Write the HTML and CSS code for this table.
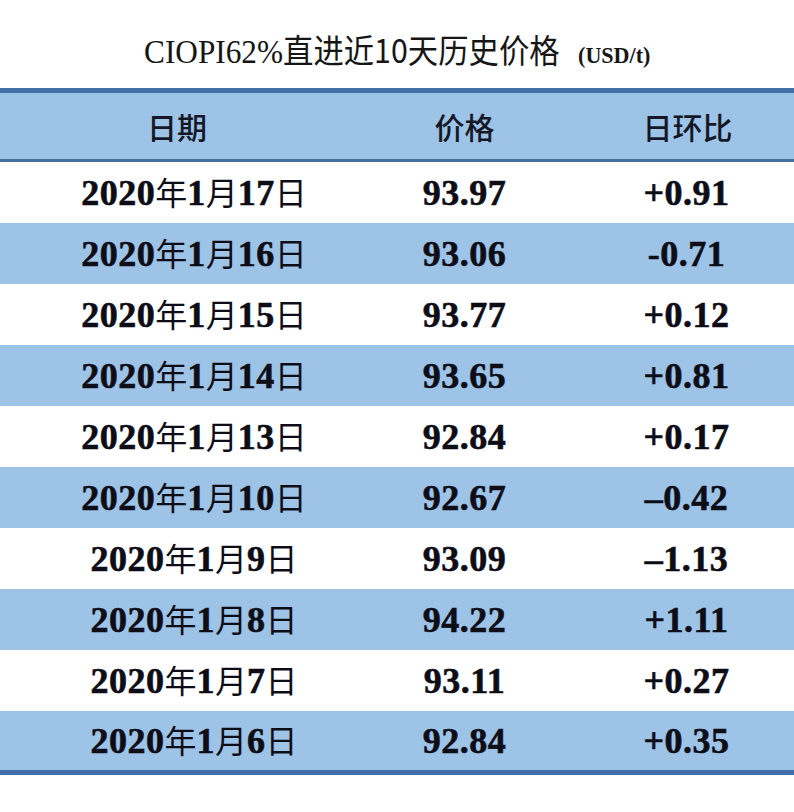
FILE: index.html
```html
<!DOCTYPE html>
<html lang="zh-CN">
<head>
<meta charset="utf-8">
<title>CIOPI62%直进近10天历史价格</title>
<link rel="stylesheet" href="styles.css">
</head>
<body>
<div class="page">
  <div class="title-wrap">
    <h1 class="title"><span class="t-latin">CIOPI62%</span><span class="t-cjk">直进近10天历史价格</span><span class="t-unit">(USD/t)</span></h1>
  </div>
  <div class="table">
    <div class="row head">
      <div class="cell c1">日期</div>
      <div class="cell c2">价格</div>
      <div class="cell c3">日环比</div>
    </div>
    <div class="row">
      <div class="cell c1">2020<span class="cj">年</span>1<span class="cj">月</span>17<span class="cj">日</span></div>
      <div class="cell c2">93.97</div>
      <div class="cell c3">+0.91</div>
    </div>
    <div class="row alt">
      <div class="cell c1">2020<span class="cj">年</span>1<span class="cj">月</span>16<span class="cj">日</span></div>
      <div class="cell c2">93.06</div>
      <div class="cell c3">-0.71</div>
    </div>
    <div class="row">
      <div class="cell c1">2020<span class="cj">年</span>1<span class="cj">月</span>15<span class="cj">日</span></div>
      <div class="cell c2">93.77</div>
      <div class="cell c3">+0.12</div>
    </div>
    <div class="row alt">
      <div class="cell c1">2020<span class="cj">年</span>1<span class="cj">月</span>14<span class="cj">日</span></div>
      <div class="cell c2">93.65</div>
      <div class="cell c3">+0.81</div>
    </div>
    <div class="row">
      <div class="cell c1">2020<span class="cj">年</span>1<span class="cj">月</span>13<span class="cj">日</span></div>
      <div class="cell c2">92.84</div>
      <div class="cell c3">+0.17</div>
    </div>
    <div class="row alt">
      <div class="cell c1">2020<span class="cj">年</span>1<span class="cj">月</span>10<span class="cj">日</span></div>
      <div class="cell c2">92.67</div>
      <div class="cell c3">–0.42</div>
    </div>
    <div class="row">
      <div class="cell c1">2020<span class="cj">年</span>1<span class="cj">月</span>9<span class="cj">日</span></div>
      <div class="cell c2">93.09</div>
      <div class="cell c3">–1.13</div>
    </div>
    <div class="row alt">
      <div class="cell c1">2020<span class="cj">年</span>1<span class="cj">月</span>8<span class="cj">日</span></div>
      <div class="cell c2">94.22</div>
      <div class="cell c3">+1.11</div>
    </div>
    <div class="row">
      <div class="cell c1">2020<span class="cj">年</span>1<span class="cj">月</span>7<span class="cj">日</span></div>
      <div class="cell c2">93.11</div>
      <div class="cell c3">+0.27</div>
    </div>
    <div class="row alt last">
      <div class="cell c1">2020<span class="cj">年</span>1<span class="cj">月</span>6<span class="cj">日</span></div>
      <div class="cell c2">92.84</div>
      <div class="cell c3">+0.35</div>
    </div>
  </div>
</div>
</body>
</html>
```

FILE: styles.css
```css
html, body {
  margin: 0;
  padding: 0;
  background: #ffffff;
}

.page {
  width: 794px;
  height: 812px;
  overflow: hidden;
  background: #ffffff;
}

.title-wrap {
  height: 88px;
  box-sizing: border-box;
  padding-top: 16px;
  display: flex;
  justify-content: center;
  align-items: center;
}

.title {
  margin: 0;
  font-weight: normal;
  display: flex;
  align-items: baseline;
  transform: scaleX(0.92);
  color: #161616;
  white-space: nowrap;
  line-height: 40px;
}

.t-latin {
  font-family: "Liberation Serif", serif;
  font-size: 34px;
}

.t-cjk {
  font-family: "Noto Sans CJK SC", sans-serif;
  font-size: 33px;
}

.t-unit {
  font-family: "Liberation Serif", serif;
  font-weight: bold;
  font-size: 24px;
  margin-left: 20px;
}

.table {
  border-top: 5px solid #3f6fa6;
  border-bottom: 5px solid #3f6fa6;
}

.row {
  display: grid;
  grid-template-columns: 354px 221px 219px;
  height: 61px;
  align-items: center;
  background: #ffffff;
}

.row.alt {
  background: #9dc3e6;
}

.row.head {
  height: 66px;
  background: #9dc3e6;
  border-bottom: 3px solid #46719f;
}

.row.last {
  height: 59px;
}

.cell {
  text-align: center;
  white-space: nowrap;
  font-family: "Liberation Serif", serif;
  font-weight: bold;
  font-size: 36px;
  letter-spacing: 0.5px;
  color: #0d0d18;
  line-height: 1;
  -webkit-text-stroke: 0.6px #0d0d18;
}

.row .c1 {
  padding-left: 34px;
}

.row .c3 {
  padding-left: 4px;
}

.head .cell {
  font-family: "Noto Sans CJK SC", sans-serif;
  font-weight: 500;
  font-size: 30px;
  letter-spacing: 0;
  color: #141826;
  -webkit-text-stroke: 0;
}

.head .c1 {
  padding-left: 0;
}

.head .c3 {
  padding-left: 6px;
}

.cj {
  font-family: "Noto Sans CJK SC", sans-serif;
  font-weight: 400;
  font-size: 32px;
  letter-spacing: 0;
  -webkit-text-stroke: 0;
}
```
